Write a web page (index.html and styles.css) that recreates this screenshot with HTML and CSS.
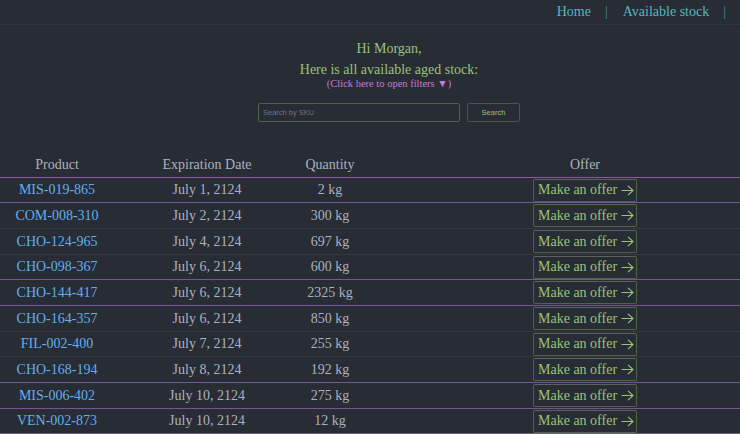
FILE: index.html
```html
<!DOCTYPE html>
<html lang="en">
<head>
<meta charset="utf-8">
<title>Available stock</title>
<link rel="stylesheet" href="styles.css">
</head>
<body>
<nav class="nav">
  <a class="nav-link" href="#">Home</a>
  <span class="sep">|</span>
  <a class="nav-link" href="#">Available stock</a>
  <span class="sep">|</span>
</nav>
<section class="intro">
  <p class="greet">Hi Morgan,</p>
  <p class="greet">Here is all available aged stock:</p>
  <a class="filters" href="#">(Click here to open filters ▼)</a>
  <form class="search">
    <input class="search-input" type="text" placeholder="Search by SKU">
    <button class="search-btn" type="button">Search</button>
  </form>
</section>
<table class="stock">
  <colgroup>
    <col class="c1"><col class="c2"><col class="c3"><col class="c4">
  </colgroup>
  <thead>
    <tr><th>Product</th><th>Expiration Date</th><th>Quantity</th><th class="offer">Offer</th></tr>
  </thead>
  <tbody>
    <tr class="strong"><td><a href="#">MIS-019-865</a></td><td>July 1, 2124</td><td>2 kg</td><td class="offer"><button class="offer-btn">Make an offer <svg width="13" height="11" viewBox="0 0 13 11"><path d="M0.5 5.5H12M7 0.8L12 5.5L7 10.2" fill="none" stroke="#98c379" stroke-width="1.1"/></svg></button></td></tr>
    <tr class="faint tall"><td><a href="#">COM-008-310</a></td><td>July 2, 2124</td><td>300 kg</td><td class="offer"><button class="offer-btn">Make an offer <svg width="13" height="11" viewBox="0 0 13 11"><path d="M0.5 5.5H12M7 0.8L12 5.5L7 10.2" fill="none" stroke="#98c379" stroke-width="1.1"/></svg></button></td></tr>
    <tr class="faint tall"><td><a href="#">CHO-124-965</a></td><td>July 4, 2124</td><td>697 kg</td><td class="offer"><button class="offer-btn">Make an offer <svg width="13" height="11" viewBox="0 0 13 11"><path d="M0.5 5.5H12M7 0.8L12 5.5L7 10.2" fill="none" stroke="#98c379" stroke-width="1.1"/></svg></button></td></tr>
    <tr class="strong"><td><a href="#">CHO-098-367</a></td><td>July 6, 2124</td><td>600 kg</td><td class="offer"><button class="offer-btn">Make an offer <svg width="13" height="11" viewBox="0 0 13 11"><path d="M0.5 5.5H12M7 0.8L12 5.5L7 10.2" fill="none" stroke="#98c379" stroke-width="1.1"/></svg></button></td></tr>
    <tr class="strong tall"><td><a href="#">CHO-144-417</a></td><td>July 6, 2124</td><td>2325 kg</td><td class="offer"><button class="offer-btn">Make an offer <svg width="13" height="11" viewBox="0 0 13 11"><path d="M0.5 5.5H12M7 0.8L12 5.5L7 10.2" fill="none" stroke="#98c379" stroke-width="1.1"/></svg></button></td></tr>
    <tr class="faint tall"><td><a href="#">CHO-164-357</a></td><td>July 6, 2124</td><td>850 kg</td><td class="offer"><button class="offer-btn">Make an offer <svg width="13" height="11" viewBox="0 0 13 11"><path d="M0.5 5.5H12M7 0.8L12 5.5L7 10.2" fill="none" stroke="#98c379" stroke-width="1.1"/></svg></button></td></tr>
    <tr class="faint"><td><a href="#">FIL-002-400</a></td><td>July 7, 2124</td><td>255 kg</td><td class="offer"><button class="offer-btn">Make an offer <svg width="13" height="11" viewBox="0 0 13 11"><path d="M0.5 5.5H12M7 0.8L12 5.5L7 10.2" fill="none" stroke="#98c379" stroke-width="1.1"/></svg></button></td></tr>
    <tr class="strong tall"><td><a href="#">CHO-168-194</a></td><td>July 8, 2124</td><td>192 kg</td><td class="offer"><button class="offer-btn">Make an offer <svg width="13" height="11" viewBox="0 0 13 11"><path d="M0.5 5.5H12M7 0.8L12 5.5L7 10.2" fill="none" stroke="#98c379" stroke-width="1.1"/></svg></button></td></tr>
    <tr class="strong tall"><td><a href="#">MIS-006-402</a></td><td>July 10, 2124</td><td>275 kg</td><td class="offer"><button class="offer-btn">Make an offer <svg width="13" height="11" viewBox="0 0 13 11"><path d="M0.5 5.5H12M7 0.8L12 5.5L7 10.2" fill="none" stroke="#98c379" stroke-width="1.1"/></svg></button></td></tr>
    <tr class="strong"><td><a href="#">VEN-002-873</a></td><td>July 10, 2124</td><td>12 kg</td><td class="offer"><button class="offer-btn">Make an offer <svg width="13" height="11" viewBox="0 0 13 11"><path d="M0.5 5.5H12M7 0.8L12 5.5L7 10.2" fill="none" stroke="#98c379" stroke-width="1.1"/></svg></button></td></tr>
  </tbody>
</table>
</body>
</html>
```

FILE: styles.css
```css
html, body {
  margin: 0;
  padding: 0;
  background: #282c34;
  overflow: hidden;
}
body {
  font-family: "Liberation Serif", "Times New Roman", serif;
  font-size: 14px;
  color: #abb2bf;
  width: 740px;
  height: 434px;
}
a { text-decoration: none; }

.nav {
  display: flex;
  justify-content: flex-end;
  align-items: center;
  height: 25px;
  border-bottom: 1px solid #33323f;
  padding-right: 14px;
  box-sizing: border-box;
}
.nav-link {
  color: #56b6c2;
  font-size: 14px;
}
.sep {
  color: #4d8f99;
  margin: 0 15px 0 14px;
}
.sep:last-child { margin-right: 0; }

.intro {
  display: flex;
  flex-direction: column;
  align-items: center;
  padding-left: 38px;
  padding-top: 13px;
}
.greet {
  margin: 0;
  color: #98c379;
  font-size: 14px;
  line-height: 21px;
}
.filters {
  color: #c678dd;
  font-size: 10.5px;
  line-height: 12px;
  margin-top: -2px;
}
.search {
  display: flex;
  gap: 7px;
  margin-top: 13px;
}
.search-input {
  width: 202px;
  height: 19px;
  box-sizing: border-box;
  background: #282c34;
  border: 1px solid #4f6446;
  border-radius: 2px;
  font-family: "Liberation Sans", Arial, sans-serif;
  font-size: 7.5px;
  color: #abb2bf;
  padding: 0 4px;
  outline: none;
}
.search-input::placeholder { color: #6f7580; }
.search-btn {
  width: 53px;
  height: 19px;
  box-sizing: border-box;
  background: #282c34;
  border: 1px solid #4a5648;
  border-radius: 2px;
  color: #98c379;
  font-family: "Liberation Sans", Arial, sans-serif;
  font-size: 7.5px;
  padding: 0;
}

.stock {
  margin-top: 30px;
  width: 740px;
  table-layout: fixed;
  border-collapse: separate;
  border-spacing: 0;
}
.c1 { width: 114px; }
.c2 { width: 186px; }
.c3 { width: 60px; }
.c4 { width: 380px; }
.stock th {
  font-weight: normal;
  font-size: 14px;
  color: #abb2bf;
  height: 25px;
  padding: 0;
  text-align: center;
  border-bottom: 1px solid #8b5ca0;
  vertical-align: middle;
}
.stock td {
  height: 24px;
  padding: 0;
  text-align: center;
  vertical-align: middle;
  border-bottom: 1px solid #7a5490;
  white-space: nowrap;
}
.stock tr.tall td { height: 25px; }
.stock tr.faint td { border-bottom-color: #3a3543; }
.stock td a { color: #61afef; }
.stock .offer { padding-left: 70px; }
.offer-btn {
  display: inline-flex;
  align-items: center;
  gap: 4px;
  width: 104px;
  height: 23px;
  box-sizing: border-box;
  background: #282c34;
  border: 1px solid #4f6446;
  border-top-color: #5c635e;
  border-radius: 2px;
  color: #98c379;
  font-family: "Liberation Serif", "Times New Roman", serif;
  font-size: 14px;
  padding: 0 0 0 4px;
  vertical-align: middle;
}
.offer-btn svg { flex: none; }
```
